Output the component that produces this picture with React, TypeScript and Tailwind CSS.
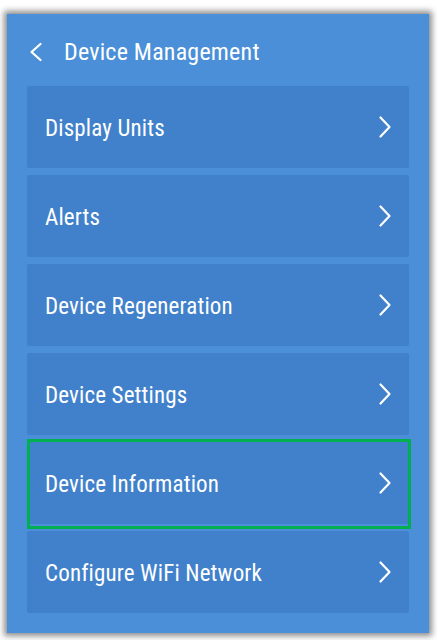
import React from "react";

const items = [
  "Display Units",
  "Alerts",
  "Device Regeneration",
  "Device Settings",
  "Device Information",
  "Configure WiFi Network",
];

function Chevron({ left = false }: { left?: boolean }) {
  return (
    <svg width="16" height="24" viewBox="0 0 16 24" fill="none">
      <path
        d={left ? "M12.5 4 L3.5 12 L12.5 20" : "M3.5 2.5 L12.5 12 L3.5 21.5"}
        stroke="white"
        strokeWidth="2.2"
        strokeLinecap="round"
        strokeLinejoin="round"
      />
    </svg>
  );
}

export default function App() {
  return (
    <div
      className="w-[437px] h-[640px] bg-white pt-[14px] pl-[7px]"
      style={{ fontFamily: "'Roboto Condensed', Roboto, sans-serif" }}
    >
      <div className="w-[422px] h-[619px] bg-[#4a8fd8] shadow-[0_0_6px_3px_rgba(0,0,0,0.45)] flex flex-col">
        <div className="h-[72px] flex items-center pl-[21px] pt-[4px]">
          <Chevron left />
          <span className="ml-[20px] text-white text-[24px] font-normal tracking-[0.2px]">Device Management</span>
        </div>
        <div className="flex flex-col gap-[7px] px-[20px]">
          {items.map((label) => (
            <div key={label} className="relative">
              <div className="h-[82px] bg-[#4181cb] rounded-[2px] flex items-center justify-between pl-[18px] pr-[16px]">
                <span className="text-white text-[23px] font-normal tracking-[0.15px] pt-[5px]">{label}</span>
                <Chevron />
              </div>
              {label === "Device Information" && (
                <div className="absolute left-0 right-[-2px] top-[-3px] bottom-[-5px] border-[3px] border-[#00b050] pointer-events-none" />
              )}
            </div>
          ))}
        </div>
      </div>
    </div>
  );
}
